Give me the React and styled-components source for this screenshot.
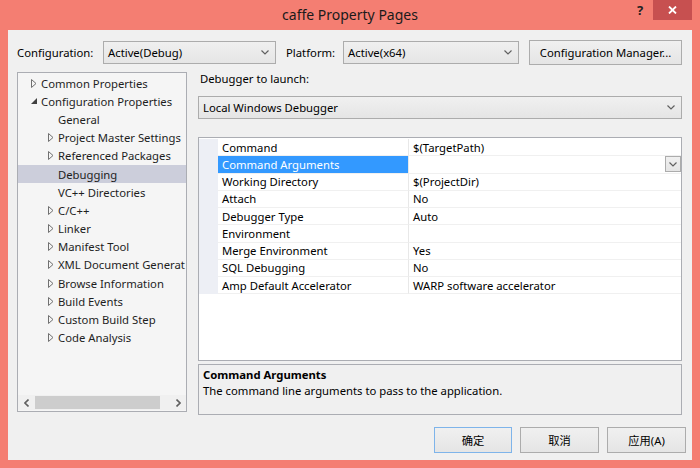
import React from "react";
import styled, { createGlobalStyle } from "styled-components";

const GlobalStyle = createGlobalStyle`
    html, body {
        margin: 0;
        padding: 0;
        width: 700px;
        height: 468px;
        overflow: hidden;
        font-family: "Segoe UI", "Noto Sans", "Noto Sans CJK SC", sans-serif;
        font-size: 11.3px;
        color: #000000;
    }
    * {
        box-sizing: border-box;
    }
`;

const treeItems = [
    { level: 1, label: "Common Properties", expander: "closed" },
    { level: 1, label: "Configuration Properties", expander: "open" },
    { level: 2, label: "General" },
    { level: 2, label: "Project Master Settings", expander: "closed" },
    { level: 2, label: "Referenced Packages", expander: "closed" },
    { level: 2, label: "Debugging", selected: true },
    { level: 2, label: "VC++ Directories" },
    { level: 2, label: "C/C++", expander: "closed" },
    { level: 2, label: "Linker", expander: "closed" },
    { level: 2, label: "Manifest Tool", expander: "closed" },
    { level: 2, label: "XML Document Generat", expander: "closed" },
    { level: 2, label: "Browse Information", expander: "closed" },
    { level: 2, label: "Build Events", expander: "closed" },
    { level: 2, label: "Custom Build Step", expander: "closed" },
    { level: 2, label: "Code Analysis", expander: "closed" },
];

const properties = [
    { name: "Command", value: "$(TargetPath)" },
    { name: "Command Arguments", value: "", selected: true },
    { name: "Working Directory", value: "$(ProjectDir)" },
    { name: "Attach", value: "No" },
    { name: "Debugger Type", value: "Auto" },
    { name: "Environment", value: "" },
    { name: "Merge Environment", value: "Yes" },
    { name: "SQL Debugging", value: "No" },
    { name: "Amp Default Accelerator", value: "WARP software accelerator" },
];

function Chevron({ color = "#606060" }) {
    return (
        <svg width="8" height="5" viewBox="0 0 8 5">
            <path d="M0.5 0.5 L4 4 L7.5 0.5" fill="none" stroke={color} strokeWidth="1.2" />
        </svg>
    );
}

function Expander({ kind }) {
    if (kind === "open") {
        return (
            <svg width="6" height="6" viewBox="0 0 6 6">
                <path d="M6 0 L6 6 L0 6 Z" fill="#404040" />
            </svg>
        );
    }
    if (kind === "closed") {
        return (
            <svg width="6" height="9" viewBox="0 0 6 9">
                <path d="M0.5 0.5 L5 4.5 L0.5 8.5 Z" fill="none" stroke="#707070" strokeWidth="1" />
            </svg>
        );
    }
    return null;
}

function ComboBox({ value, width }) {
    return (
        <Combo width={width}>
            <span>{value}</span>
            <Chevron />
        </Combo>
    );
}

export default function App() {
    return (
        <>
            <GlobalStyle />
            <Window>
                <TitleBar>
                    <span />
                    <Title>caffe Property Pages</Title>
                    <Controls>
                        <HelpButton>?</HelpButton>
                        <CloseButton>
                            <svg width="9" height="8" viewBox="0 0 9 8">
                                <path d="M1 0.5 L8 7.5 M8 0.5 L1 7.5" stroke="#FFFFFF" strokeWidth="1.8" />
                            </svg>
                        </CloseButton>
                    </Controls>
                </TitleBar>
                <Client>
                    <TopRow>
                        <Label width={86}>Configuration:</Label>
                        <ComboBox value="Active(Debug)" width={173} />
                        <Label width={57} gap={10}>Platform:</Label>
                        <ComboBox value="Active(x64)" width={176} />
                        <Button width={153} height={25} style={{ marginLeft: 10 }}>Configuration Manager...</Button>
                    </TopRow>
                    <Main>
                        <TreePanel>
                            <TreeList>
                                {treeItems.map((item) => (
                                    <TreeRow key={item.label} level={item.level} selected={item.selected}>
                                        <ExpanderBox>
                                            <Expander kind={item.expander} />
                                        </ExpanderBox>
                                        <TreeLabel>{item.label}</TreeLabel>
                                    </TreeRow>
                                ))}
                            </TreeList>
                            <HScroll>
                                <ScrollArrow>
                                    <svg width="5" height="8" viewBox="0 0 5 8">
                                        <path d="M4.5 0.5 L1 4 L4.5 7.5" fill="none" stroke="#606060" strokeWidth="1.6" />
                                    </svg>
                                </ScrollArrow>
                                <ScrollTrack>
                                    <ScrollThumb />
                                </ScrollTrack>
                                <ScrollArrow>
                                    <svg width="5" height="8" viewBox="0 0 5 8">
                                        <path d="M0.5 0.5 L4 4 L0.5 7.5" fill="none" stroke="#606060" strokeWidth="1.6" />
                                    </svg>
                                </ScrollArrow>
                            </HScroll>
                        </TreePanel>
                        <RightColumn>
                            <SectionLabel>Debugger to launch:</SectionLabel>
                            <ComboBox value="Local Windows Debugger" width={484} />
                            <PropertyGrid>
                                {properties.map((p) => (
                                    <PropRow key={p.name}>
                                        <Gutter />
                                        <NameCell selected={p.selected}>{p.name}</NameCell>
                                        <ValueCell>
                                            <span>{p.value}</span>
                                            {p.selected && (
                                                <CellDrop>
                                                    <Chevron />
                                                </CellDrop>
                                            )}
                                        </ValueCell>
                                    </PropRow>
                                ))}
                            </PropertyGrid>
                            <Description>
                                <DescTitle>Command Arguments</DescTitle>
                                <DescText>The command line arguments to pass to the application.</DescText>
                            </Description>
                        </RightColumn>
                    </Main>
                    <Footer>
                        <Button width={78} height={26} focused>确定</Button>
                        <Button width={79} height={26}>取消</Button>
                        <Button width={79} height={26}>应用(A)</Button>
                    </Footer>
                </Client>
            </Window>
        </>
    );
}

const Window = styled.div`
    width: 700px;
    height: 468px;
    background: #F47E72;
    display: flex;
    flex-direction: column;
    padding: 0 8px 8px 8px;
`;

const TitleBar = styled.div`
    height: 30px;
    display: grid;
    grid-template-columns: 1fr auto 1fr;
    align-items: start;
`;

const Title = styled.div`
    font-size: 14px;
    color: #1A1A1A;
    line-height: 30px;
`;

const Controls = styled.div`
    justify-self: end;
    display: flex;
    align-items: flex-start;
`;

const HelpButton = styled.div`
    width: 26px;
    height: 20px;
    font-size: 13px;
    font-weight: bold;
    color: #222222;
    display: flex;
    align-items: center;
    justify-content: center;
`;

const CloseButton = styled.div`
    width: 39px;
    height: 20px;
    background: #C75050;
    display: flex;
    align-items: center;
    justify-content: center;
`;

const Client = styled.div`
    flex: 1;
    background: #F0F0F0;
    display: flex;
    flex-direction: column;
    padding: 10px 6px 0 9px;
`;

const TopRow = styled.div`
    height: 25px;
    display: flex;
    align-items: center;
`;

const Label = styled.span`
    width: ${(props) => props.width}px;
    margin-left: ${(props) => props.gap || 0}px;
    flex-shrink: 0;
    white-space: nowrap;
`;

const Combo = styled.div`
    width: ${(props) => props.width}px;
    height: 23px;
    flex-shrink: 0;
    border: 1px solid #ACACAC;
    background: linear-gradient(#F0F0F0, #E5E5E5);
    display: flex;
    align-items: center;
    justify-content: space-between;
    padding: 0 6px 0 4px;
    white-space: nowrap;
`;

const Button = styled.div`
    width: ${(props) => props.width}px;
    height: ${(props) => props.height}px;
    flex-shrink: 0;
    border: 1px solid ${(props) => (props.focused ? "#7EB4EA" : "#ACACAC")};
    background: linear-gradient(#F0F0F0, #E5E5E5);
    display: flex;
    align-items: center;
    justify-content: center;
    white-space: nowrap;
`;

const Main = styled.div`
    display: flex;
    gap: 11px;
    margin-top: 7px;
    padding-right: 4px;
`;

const TreePanel = styled.div`
    width: 170px;
    height: 340px;
    border: 1px solid #ABADB3;
    background: #F5F5F5;
    display: flex;
    flex-direction: column;
`;

const TreeList = styled.div`
    flex: 1;
    padding-top: 1px;
    overflow: hidden;
`;

const TreeRow = styled.div`
    height: 18.2px;
    display: flex;
    align-items: center;
    padding-left: ${(props) => 10 + (props.level - 1) * 17}px;
    background: ${(props) => (props.selected ? "#CCCEDB" : "transparent")};
    white-space: nowrap;
`;

const ExpanderBox = styled.div`
    width: 13px;
    flex-shrink: 0;
    display: flex;
    align-items: center;
    padding-left: 3px;
`;

const TreeLabel = styled.span`
    color: #1E1E1E;
`;

const HScroll = styled.div`
    height: 15px;
    display: flex;
    align-items: center;
    background: #F0F0F0;
    margin-bottom: 1px;
`;

const ScrollArrow = styled.div`
    width: 16px;
    height: 15px;
    display: flex;
    align-items: center;
    justify-content: center;
`;

const ScrollTrack = styled.div`
    flex: 1;
    height: 13px;
    padding: 0 1px;
`;

const ScrollThumb = styled.div`
    width: 125px;
    height: 13px;
    background: #CDCDCD;
`;

const RightColumn = styled.div`
    width: 484px;
    display: flex;
    flex-direction: column;
`;

const SectionLabel = styled.div`
    height: 17px;
    line-height: 14px;
    padding-left: 2px;
    margin-bottom: 7px;
`;

const PropertyGrid = styled.div`
    margin-top: 18px;
    height: 224px;
    border: 1px solid #ABADB3;
    background: #FFFFFF;
    padding-top: 1px;
`;

const PropRow = styled.div`
    height: 17.25px;
    display: flex;
    align-items: stretch;
`;

const Gutter = styled.div`
    width: 19px;
    background: #EDEFF5;
`;

const NameCell = styled.div`
    width: 191px;
    display: flex;
    align-items: center;
    padding-left: 4px;
    border-bottom: 1px solid #F0F0F0;
    border-right: 1px solid #E8E8E8;
    background: ${(props) => (props.selected ? "#3399FF" : "#FFFFFF")};
    color: ${(props) => (props.selected ? "#FFFFFF" : "#000000")};
    white-space: nowrap;
`;

const ValueCell = styled.div`
    flex: 1;
    display: flex;
    align-items: center;
    justify-content: space-between;
    padding-left: 4px;
    border-bottom: 1px solid #F0F0F0;
    white-space: nowrap;
`;

const CellDrop = styled.div`
    width: 16px;
    height: 16px;
    border: 1px solid #ACACAC;
    background: linear-gradient(#F0F0F0, #E5E5E5);
    display: flex;
    align-items: center;
    justify-content: center;
`;

const Description = styled.div`
    margin-top: 3px;
    height: 51px;
    border: 1px solid #ABADB3;
    background: #F0F0F0;
    padding: 2px 4px;
`;

const DescTitle = styled.div`
    font-weight: bold;
    line-height: 16px;
`;

const DescText = styled.div`
    line-height: 16px;
`;

const Footer = styled.div`
    display: flex;
    justify-content: flex-end;
    gap: 8px;
    margin-top: 12px;
`;
